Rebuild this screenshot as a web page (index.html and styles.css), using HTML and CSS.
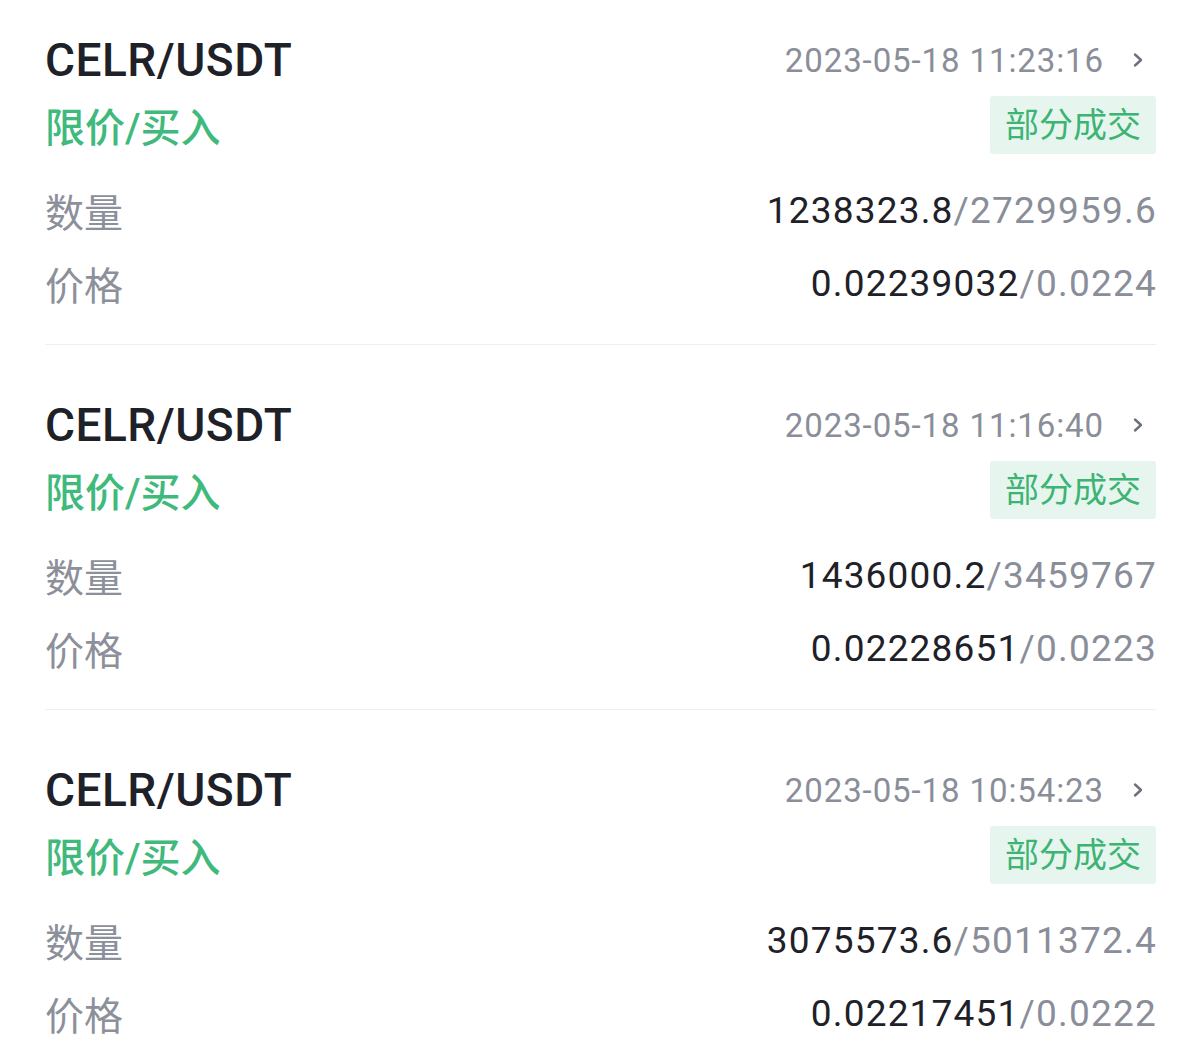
FILE: index.html
```html
<!DOCTYPE html>
<html lang="zh-CN">
<head>
    <meta charset="UTF-8">
    <meta name="viewport" content="width=device-width, initial-scale=1.0">
    <title>当前委托</title>
    <link rel="stylesheet" href="styles.css">
</head>
<body>
    <div class="orders">
        <div class="order">
            <div class="row head">
                <span class="pair">CELR/USDT</span>
                <span class="time">2023-05-18 11:23:16
                    <svg class="arrow" viewBox="0 0 12 16"><path d="M3 2.5l6 5.5-6 5.5"/></svg>
                </span>
            </div>
            <div class="row sub">
                <span class="side">限价/买入</span>
                <span class="status">部分成交</span>
            </div>
            <div class="row info">
                <span class="label">数量</span>
                <span class="value">1238323.8<em>/2729959.6</em></span>
            </div>
            <div class="row info price">
                <span class="label">价格</span>
                <span class="value">0.02239032<em>/0.0224</em></span>
            </div>
        </div>

        <div class="order">
            <div class="row head">
                <span class="pair">CELR/USDT</span>
                <span class="time">2023-05-18 11:16:40
                    <svg class="arrow" viewBox="0 0 12 16"><path d="M3 2.5l6 5.5-6 5.5"/></svg>
                </span>
            </div>
            <div class="row sub">
                <span class="side">限价/买入</span>
                <span class="status">部分成交</span>
            </div>
            <div class="row info">
                <span class="label">数量</span>
                <span class="value">1436000.2<em>/3459767</em></span>
            </div>
            <div class="row info price">
                <span class="label">价格</span>
                <span class="value">0.02228651<em>/0.0223</em></span>
            </div>
        </div>

        <div class="order">
            <div class="row head">
                <span class="pair">CELR/USDT</span>
                <span class="time">2023-05-18 10:54:23
                    <svg class="arrow" viewBox="0 0 12 16"><path d="M3 2.5l6 5.5-6 5.5"/></svg>
                </span>
            </div>
            <div class="row sub">
                <span class="side">限价/买入</span>
                <span class="status">部分成交</span>
            </div>
            <div class="row info">
                <span class="label">数量</span>
                <span class="value">3075573.6<em>/5011372.4</em></span>
            </div>
            <div class="row info price">
                <span class="label">价格</span>
                <span class="value">0.02217451<em>/0.0222</em></span>
            </div>
        </div>
    </div>
</body>
</html>
```

FILE: styles.css
```css
body {
    margin: 0;
    background: #fff;
    font-family: Roboto, "Noto Sans CJK SC", sans-serif;
    color: #1e2128;
}
.orders {
    padding: 0 44px 0 45px;
}
.order {
    padding: 58px 0 37px;
    border-bottom: 1px solid #eeeff1;
}
.order:first-child {
    padding-top: 38px;
}
.row {
    display: flex;
    justify-content: space-between;
    align-items: center;
}
.head {
    height: 44px;
}
.pair {
    font-size: 46px;
    font-weight: 500;
    letter-spacing: 0.5px;
}
.time {
    display: flex;
    align-items: center;
    font-size: 33px;
    letter-spacing: 0.9px;
    color: #8a8e99;
}
.arrow {
    width: 12px;
    height: 16px;
    margin: 0 12px 0 28px;
    fill: none;
    stroke: #6c707c;
    stroke-width: 2.4;
    stroke-linecap: round;
    stroke-linejoin: round;
}
.sub {
    margin-top: 14px;
}
.side {
    font-size: 40px;
    font-weight: 500;
    color: #3fba7c;
}
.status {
    height: 58px;
    line-height: 58px;
    padding: 0 15px;
    font-size: 34px;
    color: #3db374;
    background: #e6f6ee;
    border-radius: 3px;
}
.info {
    height: 48px;
    margin-top: 32px;
}
.info.price {
    margin-top: 25px;
}
.label {
    font-size: 39px;
    color: #8c909a;
}
.value {
    font-size: 37px;
    letter-spacing: 1.2px;
    margin-right: -1px;
    color: #1e2128;
}
.value em {
    font-style: normal;
    color: #8a8e99;
}
```
